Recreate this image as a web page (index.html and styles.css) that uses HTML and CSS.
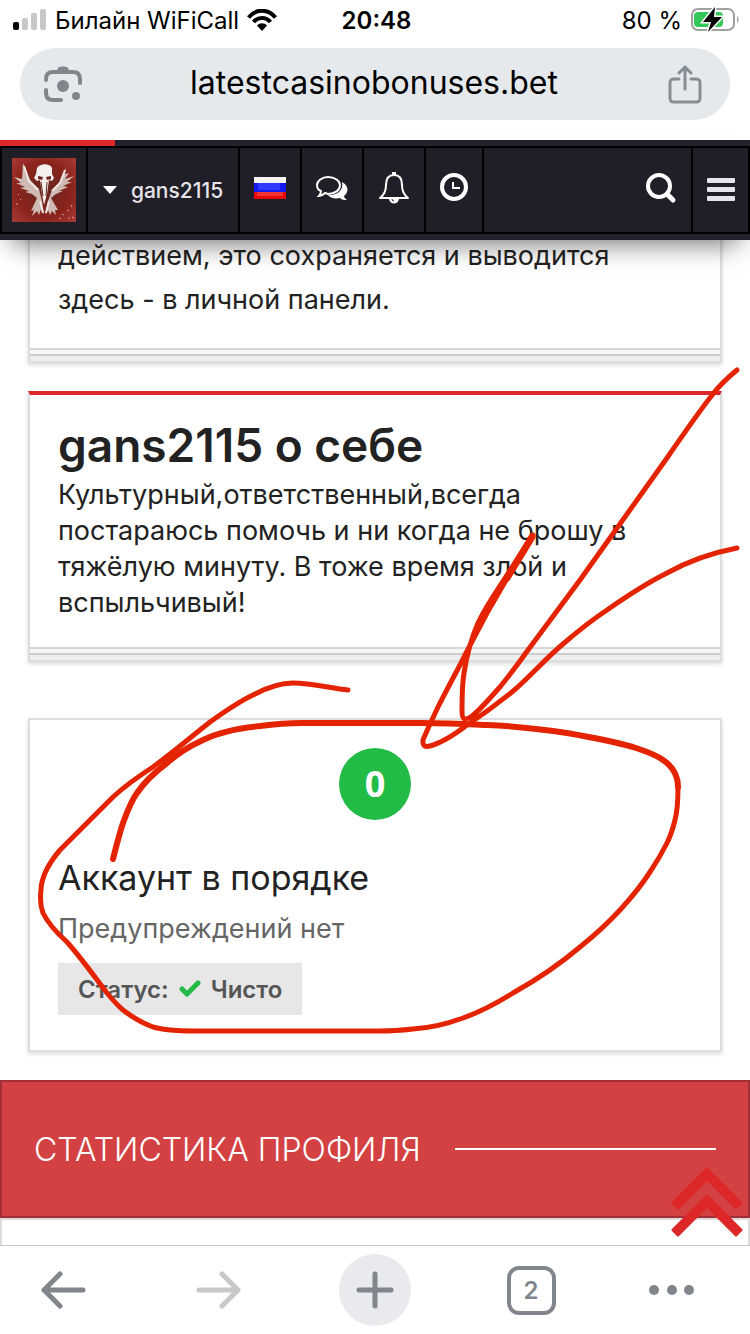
FILE: index.html
```
<!DOCTYPE html>
<html lang="ru">
<head>
	<meta charset="utf-8">
	<meta name="viewport" content="width=device-width, initial-scale=1">
	<title>gans2115</title>
	<link rel="stylesheet" href="styles.css">
</head>
<body>

	<div class="status_bar">
		<div class="status_left">
			<svg width="34" height="22" viewBox="0 0 34 22">
				<rect x="0" y="13" width="6" height="8" rx="2" fill="#000"/>
				<rect x="9" y="9" width="6" height="12" rx="2" fill="#c8c8c8"/>
				<rect x="18" y="4" width="6" height="17" rx="2" fill="#c8c8c8"/>
				<rect x="27" y="0" width="6" height="21" rx="2" fill="#c8c8c8"/>
			</svg>
			<span>Билайн WiFiCall</span>
			<svg width="30" height="22" viewBox="0 0 30 22" fill="none" stroke="#000" stroke-width="4">
				<path d="M1.500 8.500C9-.5 21-.5 28.500 8.500"/>
				<path d="M6.500 13C11 7.500 19 7.500 23.500 13"/>
				<path d="M15 22l-5-5.500c3-3 7-3 10 0z" fill="#000" stroke="none"/>
			</svg>
		</div>
		<b class="status_time">20:48</b>
		<div class="status_right">
			<span>80 %</span>
			<svg width="50" height="26" viewBox="0 0 50 26">
				<rect x="2" y="2" width="42" height="21" rx="6" fill="none" stroke="#a0a0a0" stroke-width="2"/>
				<path d="M47 9c2 1 2 6 0 7z" fill="#a0a0a0"/>
				<rect x="4" y="5" width="29" height="15" rx="4" fill="#34c759"/>
				<path d="M25 0L13 15h8l-3 10L32 10h-8z" fill="#000" stroke="#fff" stroke-width="3" paint-order="stroke"/>
			</svg>
		</div>
	</div>

	<div class="address_bar">
		<button class="icon_button" aria-label="Поиск по фото">
			<svg width="38" height="38" viewBox="0 0 38 38" fill="none" stroke="#80868b" stroke-width="4" stroke-linecap="round">
				<path d="M2 15v-1c0-5 3-7 7-7h20c4 0 7 2 7 7v4M2 25v3c0 5 3 7 7 7h8"/>
				<path d="M12 7l2-4c1-2 9-2 10 0l2 4z" fill="#80868b" stroke="none"/>
				<circle cx="19" cy="21" r="6" fill="#80868b" stroke="none"/>
				<circle cx="32" cy="31" r="4" fill="#80868b" stroke="none"/>
			</svg>
		</button>
		<input type="text" class="address" aria-label="Адрес" value="latestcasinobonuses.bet">
		<button class="icon_button" aria-label="Поделиться">
			<svg width="38" height="40" viewBox="0 0 38 40" fill="none" stroke="#868d93" stroke-width="3" stroke-linecap="round">
				<path d="M13 15H8c-3 0-4 1-4 4v15c0 3 1 4 4 4h22c3 0 4-1 4-4V19c0-3-1-4-4-4h-5M19 25V4M13 9l6-6 6 6"/>
			</svg>
		</button>
	</div>

	<header class="site_header">
		<div class="progress"></div>
		<nav class="nav">
			<a href="#" class="nav_cell nav_avatar" aria-label="Профиль">
				<svg width="64" height="64" viewBox="0 0 64 64">
					<defs>
						<radialGradient id="avatar_bg" r=".7">
							<stop offset="0" stop-color="#642820"/>
							<stop offset=".6" stop-color="#8a231c"/>
							<stop offset="1" stop-color="#a83a34"/>
						</radialGradient>
					</defs>
					<rect width="64" height="64" fill="url(#avatar_bg)"/>
					<path d="M11 5l7 17 9 9 3 12 2 13-3-5-2 6-2-4-5 5 2-6-3 1 6-13-5-4-7-2 4-1-9-3 5-1-9-4h5l-7-6 8 2z" fill="#d0bab5"/>
					<path d="M54 9l-6 15-8 8-4 11-3 13 3-4 2 5 2-4 4 4-1-5 3 0-7-12 5-4 7-3-4 0 9-4-5-1 9-4h-5l7-6-9 3 4-6-4 1z" fill="#d0bab5"/>
					<path d="M12 8l5 15 9 9M53 12l-5 13-8 8M28 43l3 12M37 43l-3 12" fill="none" stroke="#efe6e3" stroke-width="2"/>
					<path d="M25 10c3-5 13-5 15 0l0 6 2 4-2 3-3-1-2 14-3 11-2-11-2-14-3 1-3-3 2-4z" fill="#f4f0ee"/>
					<path d="M26 18l5 1-1 3-4-1zM39 18l-5 1 1 3 4-1z" fill="#6c211a"/>
					<path d="M29 24l2 14M35 24l-1 14" stroke="#6c211a"/>
					<path d="M6 36l1 1M8 41l1 1M4 46h2M50 56l2 1M55 52l2 1M59 47l1 2M60 59l2 1M56 60h2M47 61l2-1" stroke="#d49a94"/>
				</svg>
			</a>
			<a href="#" class="nav_cell nav_user">
				<svg width="14" height="8" viewBox="0 0 14 8"><path d="M0 0h14L7 8z" fill="#fff"/></svg>
				gans2115
			</a>
			<a href="#" class="nav_cell" aria-label="Русский">
				<svg width="32" height="22" viewBox="0 0 32 22">
					<rect width="32" height="22" fill="#f4f4f4"/>
					<rect y="6" width="32" height="9" fill="#1418ee"/>
					<rect x="4" y="6" width="22" height="7" fill="#2f3aff"/>
					<rect y="15" width="32" height="7" fill="#e60a0a"/>
					<rect x="3" y="15" width="26" height="4" fill="#f03434"/>
				</svg>
			</a>
			<a href="#" class="nav_cell" aria-label="Сообщения">
				<svg width="34" height="28" viewBox="0 0 34 28">
					<path d="M27 8c7 4 7 10 2 14 0 2 2 3 3 4-3 0-5 0-7-2-5 1-10 0-12-3 9 1 16-5 14-13z" fill="#fff"/>
					<path d="M13 3c7 0 12 4 12 8 0 5-5 9-12 9l-3-1c-2 2-4 3-6 3 1-1 2-3 2-5-3-1-4-3-4-6 0-4 5-8 11-8z" fill="#201e26" stroke="#fff" stroke-width="2"/>
				</svg>
			</a>
			<a href="#" class="nav_cell" aria-label="Уведомления">
				<svg width="32" height="34" viewBox="0 0 32 34">
					<path d="M16 4c6 0 8 4 8 10 0 7 2 10 6 13H2c4-3 6-6 6-13 0-6 2-10 8-10z" fill="none" stroke="#fff" stroke-width="2" stroke-linejoin="round"/>
					<path d="M14 1h4v3h-4zM11 28h10c-1 6-9 6-10 0z" fill="#fff"/>
					<path d="M14 28q0 2 2 2" fill="none" stroke="#201e26"/>
				</svg>
			</a>
			<a href="#" class="nav_cell nav_history" aria-label="История">
				<svg width="30" height="30" viewBox="0 0 30 30" fill="none" stroke="#fff">
					<circle cx="15" cy="14" r="12" stroke-width="4"/>
					<path d="M14 9v6h7" stroke-width="2"/>
				</svg>
			</a>
			<a href="#" class="nav_cell nav_search" aria-label="Поиск">
				<svg width="32" height="32" viewBox="0 0 32 32" fill="none" stroke="#fff" stroke-linecap="round">
					<circle cx="14" cy="14" r="11" stroke-width="4"/>
					<path d="M22 22l6 6" stroke-width="5"/>
				</svg>
			</a>
			<a href="#" class="nav_cell nav_menu" aria-label="Меню">
				<svg width="28" height="24" viewBox="0 0 28 24" fill="#e6e4ea">
					<rect width="28" height="5" rx="1"/>
					<rect y="9" width="28" height="5" rx="1"/>
					<rect y="18" width="28" height="5" rx="1"/>
				</svg>
			</a>
		</nav>
	</header>

	<main class="page">
		<section class="card card_intro stacked">
			<p>действием, это сохраняется и выводится<br>здесь - в личной панели.</p>
		</section>

		<section class="card card_about stacked">
			<h1>gans2115 о себе</h1>
			<p>Культурный,ответственный,всегда<br>постараюсь помочь и ни когда не брошу в<br>тяжёлую минуту. В тоже время злой и<br>вспыльчивый!</p>
		</section>

		<section class="card card_account">
			<div class="counter">0</div>
			<h2>Аккаунт в порядке</h2>
			<p>Предупреждений нет</p>
			<div class="state">
				Статус:
				<svg width="22" height="18" viewBox="0 0 22 18"><path d="M3 9l5 5L19 3" fill="none" stroke="#22bb46" stroke-width="5" stroke-linecap="round" stroke-linejoin="round"/></svg>
				Чисто
			</div>
		</section>

		<h2 class="banner">СТАТИСТИКА ПРОФИЛЯ</h2>
		<div class="stats"></div>

		<a href="#" class="to_top" aria-label="Наверх">
			<svg width="72" height="70" viewBox="0 0 72 70" fill="#dd2729" stroke="#dd2729" stroke-width="3" stroke-linejoin="round">
				<path d="M36 2l34 34-5 5-29-29L7 41l-5-5z"/>
				<path d="M36 29l34 34-5 5-29-29L7 68l-5-5z"/>
			</svg>
		</a>
	</main>

	<footer class="toolbar">
		<button class="icon_button" aria-label="Назад">
			<svg width="46" height="38" viewBox="0 0 46 38" fill="none" stroke="#80868b" stroke-width="5" stroke-linecap="round" stroke-linejoin="round"><path d="M43 19H4M20 3L4 19l16 16"/></svg>
		</button>
		<button class="icon_button" aria-label="Вперёд" disabled>
			<svg width="46" height="38" viewBox="0 0 46 38" fill="none" stroke="#c8c8c8" stroke-width="5" stroke-linecap="round" stroke-linejoin="round"><path d="M3 19h39M26 3l16 16-16 16"/></svg>
		</button>
		<button class="icon_button new_tab" aria-label="Новая вкладка">
			<svg width="38" height="38" viewBox="0 0 38 38" stroke="#80868b" stroke-width="5" stroke-linecap="round"><path d="M19 3v32M3 19h32"/></svg>
		</button>
		<button class="icon_button tabs" aria-label="Вкладки">2</button>
		<button class="icon_button" aria-label="Ещё">
			<svg width="46" height="10" viewBox="0 0 46 10" fill="#80868b"><circle cx="5" cy="5" r="5"/><circle cx="23" cy="5" r="5"/><circle cx="40" cy="5" r="5"/></svg>
		</button>
	</footer>

	<!-- red marker: arrow and ring -->
	<svg class="marker" viewBox="0 0 750 1334">
		<path d="M737 370C726 379 719 386 713 394C700 410 685 432 667 458L580 580L528 650C516 667 508 677 500 687C490 698 480 710 472 716C464 721 462 720 462 710C462 697 462 685 464 673C467 653 472 637 478 623C483 613 492 598 500 586L533 535C525 547 519 558 513 568L487 613C478 630 469 647 460 665C452 680 445 693 438 707C432 720 427 730 423 740Q422 748 430 746C441 743 454 735 467 725C482 715 497 704 512 692C530 677 545 659 563 644C578 631 592 620 607 610C627 596 645 584 667 573C685 563 706 554 737 548"/>
		<path stroke-width="7" d="M532 537L507 578"/>
		<path stroke-width="6" d="M113 859C116 847 119 835 123 823C127 812 131 801 137 793C145 781 155 772 167 763C178 753 190 746 203 740C221 731 240 728 260 726C275 724 288 723 303 723L420 723C452 723 467 724 487 725C515 726 540 729 567 733C590 737 612 741 633 747C645 751 655 754 663 760C675 768 678 777 678 787"/>
		<path d="M678 787C678 798 678 809 675 820C673 828 671 835 667 843C662 853 656 863 650 872C641 886 631 898 620 910C608 923 595 935 580 947C560 964 538 979 513 993C497 1003 480 1012 463 1018C447 1024 431 1028 413 1029Q395 1031 380 1031H203C185 1031 168 1031 153 1027C142 1023 132 1017 123 1010C117 1005 112 999 107 993C94 976 82 959 67 942C58 934 49 925 43 913C40 905 40 898 41 890C41 884 43 878 45 873C49 864 54 857 60 850L113 797C126 785 139 776 153 767C172 753 191 737 210 722C224 712 238 702 253 695C266 688 280 683 293 683C311 683 330 688 348 690"/>
	</svg>

</body>
</html>
```
FILE: styles.css
```
* {box-sizing: border-box;}

body {
	margin: 0;
	position: relative;
	display: flex;
	flex-direction: column;
	height: 100vh;
	overflow: hidden;
	background: #fff;
	color: #222;
	font-family: Inter, "Liberation Sans", sans-serif;
	font-size: 27px;
}

svg {
	display: block;
	flex: none;
}
h1, h2, p {margin: 0;}
a {text-decoration: none;}

.icon_button {
	display: flex;
	align-items: center;
	justify-content: center;
	padding: 0;
	border: 0;
	background: none;
}

/* phone status bar */
.status_bar {
	display: grid;
	grid-template-columns: 1fr auto 1fr;
	align-items: center;
	height: 40px;
	padding: 0 10px 0 13px;
	color: #000;
	font-size: 24px;
	flex: none;
}
.status_left, .status_right {
	display: flex;
	align-items: center;
	gap: 8px;
}
.status_right {justify-content: flex-end;}
.status_time {font-weight: 600;}

.address_bar {
	display: flex;
	align-items: center;
	height: 72px;
	margin: 8px 20px 20px;
	padding: 0 26px 0 24px;
	border-radius: 36px;
	background: #e5e9ec;
	flex: none;
}
.address {
	flex: 1;
	min-width: 0;
	border: 0;
	padding: 0 0 4px;
	background: none;
	color: #000;
	font-family: inherit;
	font-size: 32px;
	text-align: center;
}

/* site header */
.site_header {
	position: relative;
	z-index: 1;
	flex: none;
	padding-bottom: 6px;
	background: #24212f;
	box-shadow: 0 16px 24px -12px rgba(0,0,0,.55);
}
.progress {
	width: 115px;
	height: 6px;
	background: #dd2729;
}
.nav {
	display: flex;
	border: 2px solid #000;
	background: #201e26;
}
.nav_cell {
	display: flex;
	align-items: center;
	justify-content: center;
	width: 62px;
	height: 84px;
	padding-bottom: 4px;
	border-right: 2px solid #000;
	color: #e6e4ea;
}
.nav_avatar {
	width: 86px;
	padding-bottom: 0;
}
.nav_user {
	gap: 14px;
	width: 152px;
	padding-bottom: 0;
	font-size: 21px;
	font-weight: 500;
}
.nav_history {width: 58px;}
.nav_search {margin-left: auto;}
.nav_menu {
	width: 55px;
	padding-bottom: 0;
	border-right: 0;
}

/* page */
.page {
	position: relative;
	flex: 1;
	min-height: 0;
	display: flex;
	flex-direction: column;
	margin-top: -6px;
	overflow: hidden;
}
.card {
	flex: none;
	margin: 0 28px 28px;
	padding: 0 28px;
	border: 2px solid #ddd;
	background: #fff;
	box-shadow: 0 2px 4px rgba(0,0,0,.15);
}
.stacked::after {
	content: "";
	display: block;
	height: 13px;
	margin: 26px -28px 0;
	background: linear-gradient(#d5d5d5 2px, #f6f6f6 2px, #f6f6f6 6px, #ccc 6px, #ccc 8px, #eee 8px);
}
.card_intro {
	border-top: 0;
	line-height: 44px;
}
.card_about {
	margin-bottom: 56px;
	padding-top: 24px;
	border-top: 4px solid #dd2729;
	line-height: 36px;
}
.card_about h1 {
	margin-bottom: 6px;
	font-size: 46px;
	font-weight: 600;
	line-height: 52px;
}
.card_account {
	padding-top: 28px;
	padding-bottom: 35px;
}
.counter {
	width: 72px;
	margin: 0 auto 36px;
	border-radius: 50%;
	background: #22bb46;
	color: #fff;
	font-family: "Open Sans", sans-serif;
	font-size: 36px;
	font-weight: 700;
	line-height: 72px;
	text-align: center;
}
.card_account h2 {
	font-size: 34px;
	font-weight: 400;
	line-height: 44px;
}
.card_account p {
	margin: 10px 0 16px;
	color: #666;
	line-height: 37px;
}
.state {
	display: inline-flex;
	align-items: center;
	gap: 10px;
	height: 52px;
	padding: 0 20px;
	background: #e7e7e7;
	color: #555;
	font-size: 24px;
	font-weight: 600;
}

.banner {
	display: flex;
	align-items: center;
	gap: 34px;
	height: 138px;
	flex: none;
	padding: 0 32px;
	border: 2px solid #a03036;
	background: #d34142;
	color: #fff;
	font-size: 32px;
	font-weight: 300;
}
.banner::after {
	content: "";
	flex: 1;
	height: 2px;
	background: #fff;
}
.stats {
	flex: 1;
	border: 2px solid #ddd;
	border-bottom: 0;
}
.to_top {
	position: absolute;
	right: 7px;
	bottom: 8px;
}

/* browser toolbar */
.toolbar {
	display: grid;
	grid-template-columns: 21fr 31fr 21fr 31fr 16fr;
	align-items: center;
	justify-items: center;
	height: 89px;
	padding-right: 30px;
	border-top: 1px solid #c8c8c8;
	background: #fff;
	flex: none;
}
.new_tab {
	width: 72px;
	height: 72px;
	border-radius: 50%;
	background: #e8eaed;
}
.tabs {
	width: 49px;
	height: 49px;
	border: 4px solid #80868b;
	border-radius: 12px;
	color: #80868b;
	font-family: inherit;
	font-size: 24px;
	font-weight: 600;
}

.marker {
	position: absolute;
	top: 0;
	left: 0;
	z-index: 2;
	width: 100%;
	fill: none;
	stroke: #e42400;
	stroke-width: 5;
	stroke-linecap: round;
	stroke-linejoin: round;
	pointer-events: none;
}
```
